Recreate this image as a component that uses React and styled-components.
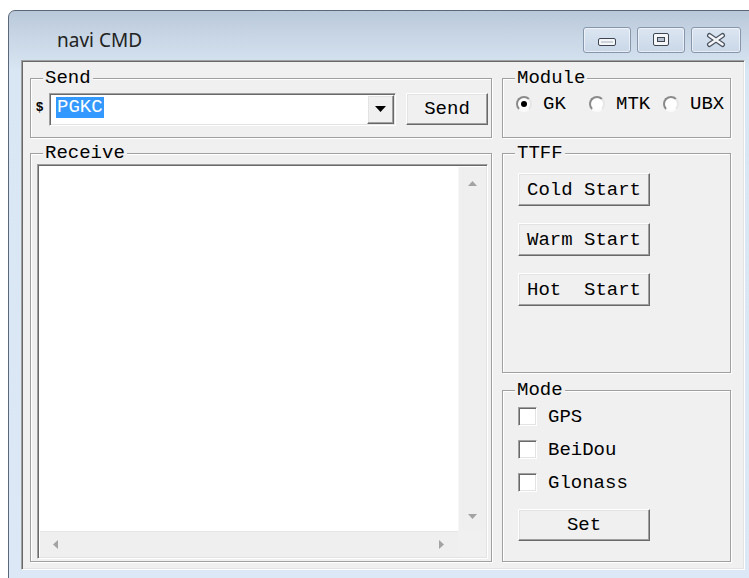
import React from "react";
import styled, { createGlobalStyle } from "styled-components";

const mono = `"Liberation Mono", "Courier New", monospace`;

const GlobalStyle = createGlobalStyle`
  html, body {
    margin: 0;
    padding: 0;
    background: #fff;
    overflow: hidden;
  }
  body {
    width: 749px;
    height: 578px;
  }
`;

const Frame = styled.div`
  margin: 10px 0 0 8px;
  width: 750px;
  height: 584px;
  box-sizing: border-box;
  border: 1px solid #5b6878;
  border-radius: 7px 7px 0 0;
  background: linear-gradient(#bac9da 0, #d3e0ee 48px, #d9e6f4 60px, #dce8f5 100%);
  display: flex;
  flex-direction: column;
`;

const TitleBar = styled.div`
  height: 49px;
  box-sizing: border-box;
  padding: 16px 16px 0 48px;
  display: flex;
  align-items: flex-start;
`;

const Title = styled.div`
  font: 19px "Noto Sans", "Open Sans", sans-serif;
  line-height: 26px;
  color: #222;
`;

const Captions = styled.div`
  margin-left: auto;
  display: flex;
  gap: 6px;
`;

const CaptionButton = styled.div`
  width: ${(p) => p.$w}px;
  height: 26px;
  box-sizing: border-box;
  border: 1px solid #8796aa;
  border-radius: 3px;
  background: linear-gradient(#dce6f2, #c9d7e7);
  box-shadow: inset 0 0 0 1px rgba(255, 255, 255, 0.55);
  display: flex;
  align-items: center;
  justify-content: center;
`;

const Client = styled.div`
  margin-left: 12px;
  width: 724px;
  height: 510px;
  box-sizing: border-box;
  border: 1px solid;
  border-color: #a0a0a0 #fff #fff #a0a0a0;
  box-shadow: inset 1px 1px 0 #696969, inset -1px -1px 0 #e3e3e3;
  background: #f0f0f0;
  padding: 7px 13px 7px 8px;
  display: grid;
  grid-template-columns: 462px 229px;
  column-gap: 10px;
  align-items: start;
  font: 19px ${mono};
  color: #000;
`;

const Column = styled.div`
  display: flex;
  flex-direction: column;
  gap: ${(p) => p.$gap || 5}px;
`;

const GroupBox = styled.fieldset`
  margin: 0;
  padding: 0;
  min-width: 0;
  height: ${(p) => p.$h}px;
  box-sizing: border-box;
  border: 1px solid #a0a0a0;
  box-shadow: inset 1px 1px 0 #fff, 1px 1px 0 #fff;
`;

const Legend = styled.legend`
  margin-left: 12px;
  padding: 0 2px;
  line-height: 20px;
  background: #f0f0f0;
`;

const SendRow = styled.div`
  display: flex;
  align-items: center;
  height: 34px;
  margin-top: 4px;
  padding-left: 5px;
`;

const Dollar = styled.span`
  font: bold 13px "Liberation Sans", Arial, sans-serif;
  width: 13px;
  margin-bottom: 6px;
`;

const Sunken = `
  border: 1px solid;
  border-color: #a0a0a0 #fff #fff #a0a0a0;
  box-shadow: inset 1px 1px 0 #696969, inset -1px -1px 0 #e3e3e3;
  background: #fff;
  box-sizing: border-box;
`;

const Raised = `
  border: 1px solid;
  border-color: #fff #696969 #696969 #fff;
  box-shadow: inset -1px -1px 0 #a0a0a0, inset 1px 1px 0 #e3e3e3;
  background: #f0f0f0;
  box-sizing: border-box;
`;

const Combo = styled.div`
  ${Sunken}
  width: 347px;
  height: 33px;
  padding: 1px;
  display: flex;
`;

const ComboText = styled.div`
  flex: 1;
  display: flex;
  align-items: center;
  padding: 0 0 3px 5px;
`;

const Selected = styled.span`
  background: #3399ff;
  color: #fff;
  line-height: 21px;
  padding: 0 1px;
`;

const DropButton = styled.div`
  ${Raised}
  width: 27px;
  display: flex;
  align-items: center;
  justify-content: center;
`;

const Button = styled.button`
  ${Raised}
  width: ${(p) => p.$w}px;
  height: ${(p) => p.$h || 33}px;
  margin: 0;
  padding: 0;
  font: 19px ${mono};
  color: #000;
  white-space: pre;
  flex: none;
`;

const SendButton = styled(Button)`
  margin-left: 10px;
`;

const RadioRow = styled.div`
  display: flex;
  align-items: center;
  height: 32px;
  padding-left: 13px;
`;

const RadioItem = styled.label`
  display: flex;
  align-items: center;
  gap: 11px;
  width: ${(p) => p.$w}px;
  flex: none;
`;

const RadioDot = styled.span`
  width: 16px;
  height: 16px;
  box-sizing: border-box;
  border-radius: 50%;
  border: 2px solid;
  border-color: #8a8a8a #e6e6e6 #fafafa #8a8a8a;
  background: #fff;
  display: flex;
  align-items: center;
  justify-content: center;

  &::after {
    content: "";
    width: 6px;
    height: 6px;
    border-radius: 50%;
    background: #000;
    visibility: ${(p) => (p.$on ? "visible" : "hidden")};
  }
`;

const ListBox = styled.div`
  ${Sunken}
  height: 395px;
  margin: 1px 3px 0 6px;
  padding: 2px 1px 1px 2px;
  display: grid;
  grid-template-columns: 1fr 28px;
  grid-template-rows: 1fr 26px;
`;

const ListArea = styled.div`
  background: #fff;
`;

const VScroll = styled.div`
  background: #efefef;
  border-left: 1px solid #f7f7f7;
  display: flex;
  flex-direction: column;
  justify-content: space-between;
  align-items: center;
  padding: 14px 0 12px;
`;

const HScroll = styled.div`
  background: #efefef;
  border-top: 1px solid #e6e6e6;
  display: flex;
  justify-content: space-between;
  align-items: center;
  padding: 0 14px 0 13px;
`;

const Corner = styled.div`
  background: #f0f0f0;
`;

const ButtonStack = styled.div`
  display: flex;
  flex-direction: column;
  gap: 17px;
  padding: 10px 0 0 15px;
`;

const CheckList = styled.div`
  display: flex;
  flex-direction: column;
  padding-left: 15px;
`;

const CheckRow = styled.label`
  display: flex;
  align-items: center;
  gap: 11px;
  height: 33px;
`;

const CheckBox = styled.span`
  ${Sunken}
  width: 19px;
  height: 19px;
`;

const SetButton = styled(Button)`
  margin-top: 10px;
`;

const Glyph = styled.svg`
  margin-top: ${(p) => p.$dy || 0}px;
`;

const Arrow = ({ dir, color = "#a3a3a3", size = 9 }) => {
  const h = size / 2 + 0.5;
  const pts = {
    up: `0,${h} ${size / 2},0 ${size},${h}`,
    down: `0,0 ${size},0 ${size / 2},${h}`,
    left: `${h},0 ${h},${size} 0,${size / 2}`,
    right: `0,0 ${h},${size / 2} 0,${size}`,
  }[dir];
  const vertical = dir === "up" || dir === "down";
  return (
    <svg width={vertical ? size : h} height={vertical ? h : size}>
      <polygon points={pts} fill={color} />
    </svg>
  );
};

const MinGlyph = () => (
  <Glyph width="20" height="8" viewBox="0 0 20 8" $dy={3}>
    <rect x="1.5" y="0.5" width="17" height="7" rx="1.5" fill="#f4f6f8" stroke="#3e4654" />
    <rect x="4" y="3.5" width="12" height="1" fill="#a5afbb" />
  </Glyph>
);

const MaxGlyph = () => (
  <Glyph width="18" height="13" viewBox="0 0 18 13" $dy={-1}>
    <rect x="1.5" y="0.5" width="15" height="12" rx="1.5" fill="#f4f6f8" stroke="#3e4654" />
    <rect x="5.5" y="4.5" width="7" height="4" fill="#b8c2ce" stroke="#3e4654" />
  </Glyph>
);

const CloseGlyph = () => (
  <Glyph width="22" height="16" viewBox="0 0 22 16">
    <path d="M4.5 3.5 L17.5 12.5 M17.5 3.5 L4.5 12.5" stroke="#4a5260" strokeWidth="5" strokeLinecap="round" />
    <path d="M4.5 3.5 L17.5 12.5 M17.5 3.5 L4.5 12.5" stroke="#f4f6f8" strokeWidth="2.6" strokeLinecap="round" />
  </Glyph>
);

export default function App() {
  return (
    <>
      <GlobalStyle />
      <Frame>
        <TitleBar>
          <Title>navi CMD</Title>
          <Captions>
            <CaptionButton $w={48}>
              <MinGlyph />
            </CaptionButton>
            <CaptionButton $w={48}>
              <MaxGlyph />
            </CaptionButton>
            <CaptionButton $w={50}>
              <CloseGlyph />
            </CaptionButton>
          </Captions>
        </TitleBar>

        <Client>
          <Column>
            <GroupBox $h={70}>
              <Legend>Send</Legend>
              <SendRow>
                <Dollar>$</Dollar>
                <Combo>
                  <ComboText>
                    <Selected>PGKC</Selected>
                  </ComboText>
                  <DropButton>
                    <Arrow dir="down" color="#000" size={11} />
                  </DropButton>
                </Combo>
                <SendButton $w={82} $h={32}>
                  Send
                </SendButton>
              </SendRow>
            </GroupBox>

            <GroupBox $h={419}>
              <Legend>Receive</Legend>
              <ListBox>
                <ListArea />
                <VScroll>
                  <Arrow dir="up" />
                  <Arrow dir="down" />
                </VScroll>
                <HScroll>
                  <Arrow dir="left" />
                  <Arrow dir="right" />
                </HScroll>
                <Corner />
              </ListBox>
            </GroupBox>
          </Column>

          <Column>
            <GroupBox $h={70}>
              <Legend>Module</Legend>
              <RadioRow>
                <RadioItem $w={73}>
                  <RadioDot $on />
                  GK
                </RadioItem>
                <RadioItem $w={74}>
                  <RadioDot />
                  MTK
                </RadioItem>
                <RadioItem $w={66}>
                  <RadioDot />
                  UBX
                </RadioItem>
              </RadioRow>
            </GroupBox>

            <Column $gap={7}>
              <GroupBox $h={230}>
                <Legend>TTFF</Legend>
                <ButtonStack>
                  <Button $w={132}>Cold Start</Button>
                  <Button $w={132}>Warm Start</Button>
                  <Button $w={132}>{"Hot  Start"}</Button>
                </ButtonStack>
              </GroupBox>

              <GroupBox $h={182}>
                <Legend>Mode</Legend>
                <CheckList>
                  <CheckRow>
                    <CheckBox />
                    GPS
                  </CheckRow>
                  <CheckRow>
                    <CheckBox />
                    BeiDou
                  </CheckRow>
                  <CheckRow>
                    <CheckBox />
                    Glonass
                  </CheckRow>
                  <SetButton $w={132} $h={32}>
                    Set
                  </SetButton>
                </CheckList>
              </GroupBox>
            </Column>
          </Column>
        </Client>
      </Frame>
    </>
  );
}
